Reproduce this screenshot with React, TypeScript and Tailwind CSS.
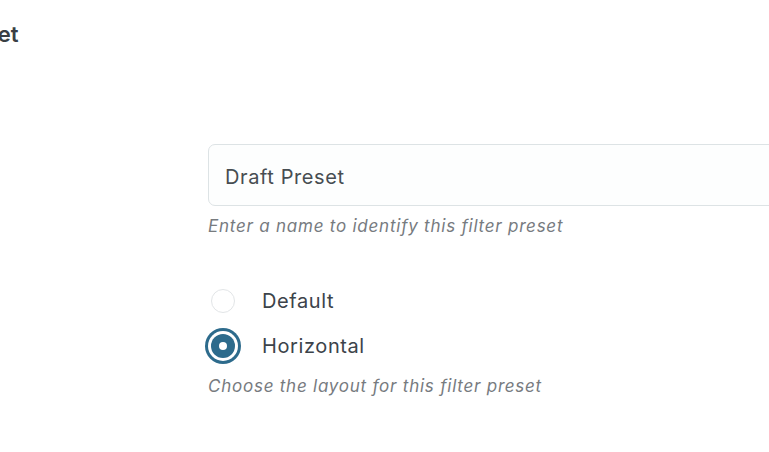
import { useState } from "react";

export default function App() {
    const [layout, setLayout] = useState("horizontal");
    const [name, setName] = useState("Draft Preset");

    const opcoes = [
        { id: "default", label: "Default" },
        { id: "horizontal", label: "Horizontal" },
    ];

    return (
        <div className="w-[769px] h-[452px] overflow-hidden bg-white text-[#3c434a]" style={{ fontFamily: "Inter, 'Noto Sans', sans-serif" }}>
            {/* TITULO (cortado na esquerda) */}
            <h1 className="-ml-[98px] pt-[20px] text-[22px] font-semibold leading-[28px] text-[#3a3f44] tracking-[0.01em]">
                Edit Preset
            </h1>

            <div className="grid grid-cols-[208px_1fr] mt-[96px]">
                <div />
                <div>
                    {/* NOME */}
                    <input
                        value={name}
                        onChange={(e) => setName(e.target.value)}
                        className="w-[600px] h-[62px] px-[16px] pt-[3px] rounded-[7px] border border-[#dde3e5] bg-[#fdfefe] text-[20px] tracking-[0.03em] text-[#474d52] outline-none"
                    />
                    <p className="mt-[9px] text-[17px] italic text-[#777b7f] leading-[22px] tracking-[0.045em]">
                        Enter a name to identify this filter preset
                    </p>

                    {/* LAYOUT */}
                    <div className="mt-[47px] flex flex-col gap-[11px]">
                        {opcoes.map((op) => {
                            const ativo = layout === op.id;
                            return (
                                <label key={op.id} className="flex items-center gap-[24px] cursor-pointer h-[34px]">
                                    <span className="w-[30px] flex justify-center">
                                        <button
                                            onClick={() => setLayout(op.id)}
                                            className={`w-[24px] h-[24px] rounded-full flex items-center justify-center ${
                                                ativo
                                                    ? "bg-[#2d6b8c] ring-[3px] ring-[#2d6b8c] ring-offset-[3px] ring-offset-white"
                                                    : "border-[1.5px] border-[#e2e5e7] bg-white"
                                            }`}
                                        >
                                            {ativo && <span className="w-[8px] h-[8px] rounded-full bg-white" />}
                                        </button>
                                    </span>
                                    <span className="text-[20px] tracking-[0.03em] text-[#3c434a]">{op.label}</span>
                                </label>
                            );
                        })}
                    </div>
                    <p className="mt-[12px] text-[17px] italic text-[#777b7f] leading-[22px] tracking-[0.045em]">
                        Choose the layout for this filter preset
                    </p>
                </div>
            </div>
        </div>
    );
}
